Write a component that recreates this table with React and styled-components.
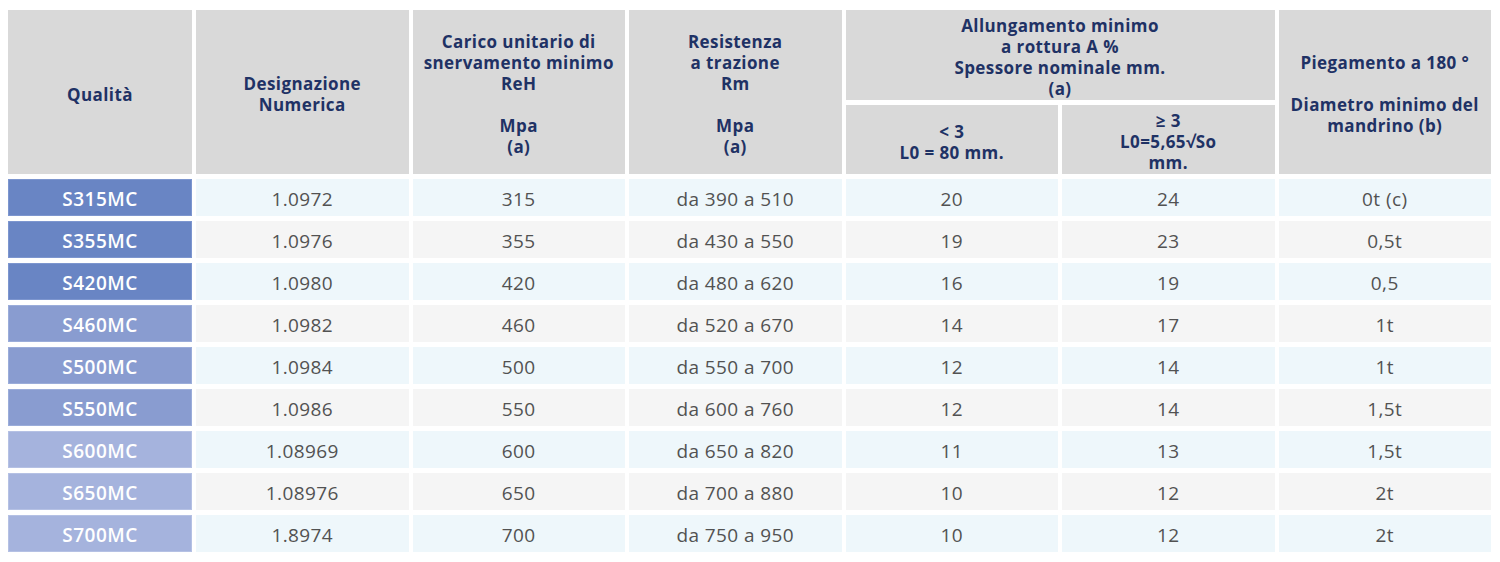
import React from 'react';
import styled, { createGlobalStyle } from 'styled-components';

const colors = {
  head: '#d9d9d9',
  navy: '#1f3265',
  text: '#525252',
  rowLight: '#eef7fb',
  rowGrey: '#f5f5f5',
  grade: ['#6985c4', '#899cd0', '#a5b3dd'],
  gradeEdge: ['#7d96cf', '#9badda', '#b5c1e4']
};

const GlobalStyle = createGlobalStyle`
  html, body {
    margin: 0;
    padding: 0;
    background: #ffffff;
  }
  body {
    font-family: 'Open Sans', 'Noto Sans', 'Liberation Sans', sans-serif;
  }
`;

const Page = styled.div`
  padding: 10px 8px;
`;

const Table = styled.div`
  display: grid;
  grid-template-columns: 184px repeat(6, 212.5px);
  grid-template-rows: 90px 69px repeat(9, 37px);
  column-gap: 4px;
  row-gap: 5px;
`;

const HeadCell = styled.div`
  grid-column: ${(p) => p.col} / span ${(p) => p.span || 1};
  grid-row: ${(p) => p.row || 1} / span ${(p) => p.rows || 1};
  background: ${colors.head};
  color: ${colors.navy};
  font-weight: 700;
  font-size: 17px;
  letter-spacing: 0.4px;
  line-height: 21px;
  text-align: center;
  display: flex;
  flex-direction: column;
  align-items: center;
  justify-content: center;
  padding-top: 4px;
  box-sizing: border-box;
`;

const Line = styled.span`
  display: block;
  min-height: 21px;
  white-space: nowrap;
`;

const Row = styled.div`
  display: contents;
`;

const GradeCell = styled.div`
  background: ${(p) => colors.grade[p.tone]};
  border: 1px solid ${(p) => colors.gradeEdge[p.tone]};
  box-sizing: border-box;
  color: #ffffff;
  font-weight: 600;
  font-size: 19px;
  letter-spacing: 0.5px;
  display: flex;
  align-items: center;
  justify-content: center;
  padding-top: 3px;
`;

const DataCell = styled.div`
  background: ${(p) => (p.even ? colors.rowGrey : colors.rowLight)};
  color: ${colors.text};
  font-size: 19px;
  letter-spacing: 0.4px;
  display: flex;
  align-items: center;
  justify-content: center;
  padding-top: 3px;
`;

const rows = [
  ['S315MC', '1.0972', '315', 'da 390 a 510', '20', '24', '0t (c)'],
  ['S355MC', '1.0976', '355', 'da 430 a 550', '19', '23', '0,5t'],
  ['S420MC', '1.0980', '420', 'da 480 a 620', '16', '19', '0,5'],
  ['S460MC', '1.0982', '460', 'da 520 a 670', '14', '17', '1t'],
  ['S500MC', '1.0984', '500', 'da 550 a 700', '12', '14', '1t'],
  ['S550MC', '1.0986', '550', 'da 600 a 760', '12', '14', '1,5t'],
  ['S600MC', '1.08969', '600', 'da 650 a 820', '11', '13', '1,5t'],
  ['S650MC', '1.08976', '650', 'da 700 a 880', '10', '12', '2t'],
  ['S700MC', '1.8974', '700', 'da 750 a 950', '10', '12', '2t']
];

const Lines = ({ items }) => items.map((t, i) => <Line key={i}>{t}</Line>);

const App = () => (
  <Page>
    <GlobalStyle />
    <Table>
      <HeadCell col={1} rows={2}>
        <Lines items={['Qualità']} />
      </HeadCell>
      <HeadCell col={2} rows={2}>
        <Lines items={['Designazione', 'Numerica']} />
      </HeadCell>
      <HeadCell col={3} rows={2}>
        <Lines items={['Carico unitario di', 'snervamento minimo', 'ReH', '', 'Mpa', '(a)']} />
      </HeadCell>
      <HeadCell col={4} rows={2}>
        <Lines items={['Resistenza', 'a trazione', 'Rm', '', 'Mpa', '(a)']} />
      </HeadCell>
      <HeadCell col={5} span={2}>
        <Lines items={['Allungamento minimo', 'a rottura A %', 'Spessore nominale mm.', '(a)']} />
      </HeadCell>
      <HeadCell col={7} rows={2}>
        <Lines items={['Piegamento a 180 °', '', 'Diametro minimo del', 'mandrino (b)']} />
      </HeadCell>
      <HeadCell col={5} row={2}>
        <Lines items={['< 3', 'L0 = 80 mm.']} />
      </HeadCell>
      <HeadCell col={6} row={2}>
        <Lines items={['≥ 3', 'L0=5,65√So', 'mm.']} />
      </HeadCell>

      {rows.map(([grade, ...values], i) => (
        <Row key={grade}>
          <GradeCell tone={Math.floor(i / 3)}>{grade}</GradeCell>
          {values.map((v, j) => (
            <DataCell key={j} even={i % 2 === 1}>
              {v}
            </DataCell>
          ))}
        </Row>
      ))}
    </Table>
  </Page>
);

export default App;
